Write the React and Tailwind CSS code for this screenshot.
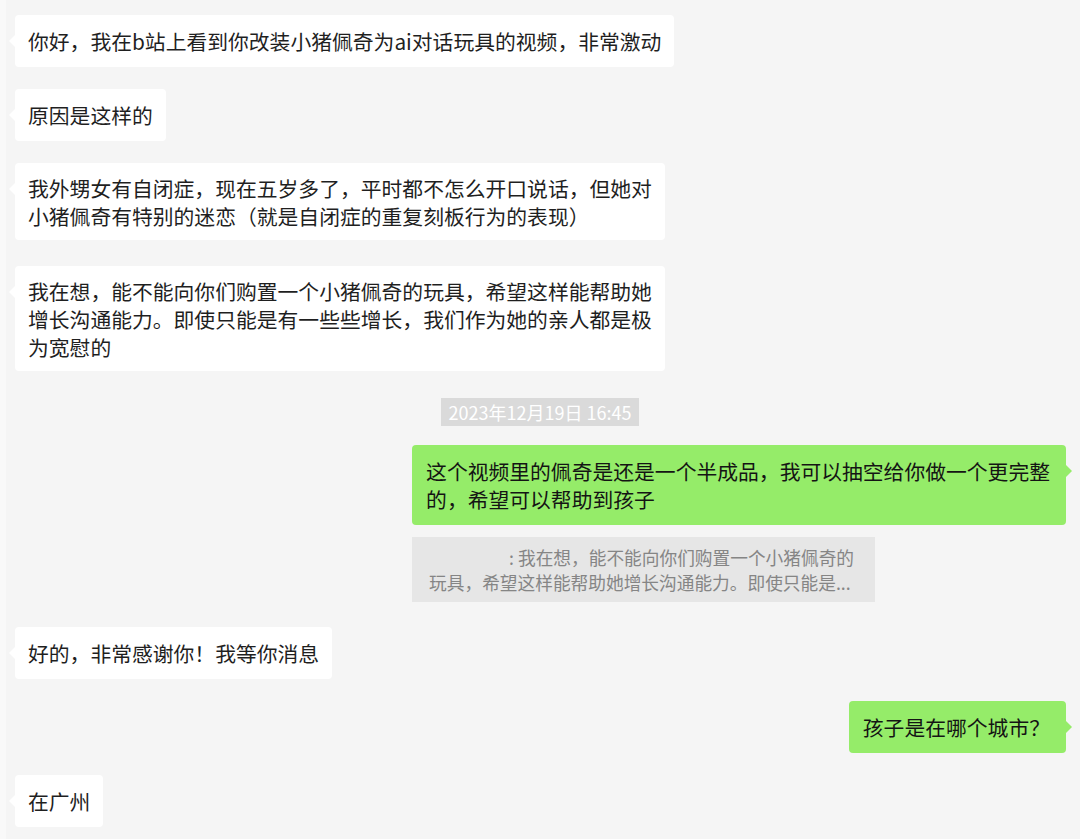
const FONT = "font-['Noto_Sans_CJK_SC','Noto_Sans',sans-serif]";

function Left({ lines, className = '' }) {
  return (
    <div className={`flex justify-start pl-[9px] ${className}`}>
      <div className="relative bg-white rounded-[4px] px-[13px] py-[10.5px] min-h-[52px] flex flex-col justify-center">
        <span className="absolute left-[-6px] top-[20px] w-0 h-0 border-y-[6px] border-y-transparent border-r-[6px] border-r-white" />
        {lines.map((l, i) => (
          <div key={i} className="whitespace-nowrap text-[20.8px] leading-[28px] text-[#1f1f1f]">{l}</div>
        ))}
      </div>
    </div>
  );
}

function Right({ lines, className = '', children }) {
  return (
    <div className={`flex justify-end pr-[14px] ${className}`}>
      <div className="flex flex-col items-start">
        <div className="relative bg-[#95ec69] rounded-[4px] pl-[14px] pr-[16px] py-[12px] min-h-[52px] flex flex-col justify-center">
          <span className="absolute right-[-6px] top-[20px] w-0 h-0 border-y-[6px] border-y-transparent border-l-[6px] border-l-[#95ec69]" />
          {lines.map((l, i) => (
            <div key={i} className="whitespace-nowrap text-[20.8px] leading-[28px] text-[#141414]">{l}</div>
          ))}
        </div>
        {children}
      </div>
    </div>
  );
}

export default function App() {
  return (
    <div className={`min-h-screen flex bg-[#f5f5f5] ${FONT}`}>
      <div className="w-[6px] shrink-0 bg-[#f9f9f9]" />
      <div className="flex-1 flex flex-col pt-[15px] pb-[10px]">
        <Left lines={['你好，我在b站上看到你改装小猪佩奇为ai对话玩具的视频，非常激动']} />
        <Left className="mt-[22px]" lines={['原因是这样的']} />
        <Left
          className="mt-[22px]"
          lines={[
            '我外甥女有自闭症，现在五岁多了，平时都不怎么开口说话，但她对',
            '小猪佩奇有特别的迷恋（就是自闭症的重复刻板行为的表现）',
          ]}
        />
        <Left
          className="mt-[26px]"
          lines={[
            '我在想，能不能向你们购置一个小猪佩奇的玩具，希望这样能帮助她',
            '增长沟通能力。即使只能是有一些些增长，我们作为她的亲人都是极',
            '为宽慰的',
          ]}
        />

        {/* time divider */}
        <div className="self-center mr-[6px] mt-[27px] bg-[#dadada] text-white text-[18px] leading-[28px] px-[8px]">
          2023年12月19日 16:45
        </div>

        <Right
          className="mt-[19px]"
          lines={[
            '这个视频里的佩奇是还是一个半成品，我可以抽空给你做一个更完整',
            '的，希望可以帮助到孩子',
          ]}
        >
          <div className="mt-[12px] bg-[#e6e6e6] text-[#858585] text-[17.7px] leading-[25px] pl-[17px] pr-[17px] py-[7.5px] w-[463px]">
            <div className="whitespace-nowrap pl-[80px]">: 我在想，能不能向你们购置一个小猪佩奇的</div>
            <div className="whitespace-nowrap">玩具，希望这样能帮助她增长沟通能力。即使只能是...</div>
          </div>
        </Right>

        <Left className="mt-[25px]" lines={['好的，非常感谢你！我等你消息']} />
        <Right className="mt-[22px]" lines={['孩子是在哪个城市？']} />
        <Left className="mt-[22px]" lines={['在广州']} />
      </div>
    </div>
  );
}
